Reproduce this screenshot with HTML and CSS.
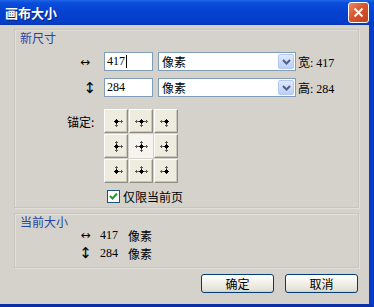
FILE: index.html
```html
<!DOCTYPE html>
<html lang="zh">
<head>
    <meta charset="UTF-8">
    <title>画布大小</title>
    <link rel="stylesheet" href="styles.css">
</head>
<body>
    <svg class="defs" width="0" height="0">
        <symbol id="dot" viewBox="0 0 13 11"><rect x="5" y="4" width="3" height="3" fill="#000"/><rect x="6" y="3" width="1" height="5" fill="#000"/><rect x="4" y="5" width="5" height="1" fill="#000"/></symbol>
        <symbol id="ar" viewBox="0 0 13 11"><rect x="9" y="5" width="4" height="1" fill="#5a5a5a"/><rect x="11" y="4" width="1" height="3" fill="#5a5a5a"/></symbol>
        <symbol id="al" viewBox="0 0 13 11"><rect x="0" y="5" width="4" height="1" fill="#5a5a5a"/><rect x="1" y="4" width="1" height="3" fill="#5a5a5a"/></symbol>
        <symbol id="au" viewBox="0 0 13 11"><rect x="6" y="0" width="1" height="3" fill="#5a5a5a"/><rect x="5" y="1" width="3" height="1" fill="#5a5a5a"/></symbol>
        <symbol id="ad" viewBox="0 0 13 11"><rect x="6" y="8" width="1" height="3" fill="#5a5a5a"/><rect x="5" y="9" width="3" height="1" fill="#5a5a5a"/></symbol>
    </svg>

    <div class="window">
        <div class="titlebar">
            <span class="title">画布大小</span>
            <span class="close">
                <svg width="11" height="11" viewBox="0 0 11 11"><path d="M1.5 1.5 L9.5 9.5 M9.5 1.5 L1.5 9.5" stroke="#fff" stroke-width="2"/></svg>
            </span>
        </div>

        <div class="body">
            <div class="group size-group">
                <div class="legend">新尺寸</div>

                <div class="dim-row">
                    <span class="sym sym-w">↔</span>
                    <span class="field">417<span class="caret"></span></span>
                    <span class="select">像素<span class="drop"><svg width="9" height="6" viewBox="0 0 9 6"><path d="M1 1 L4.5 4.5 L8 1" fill="none" stroke="#4d6185" stroke-width="2"/></svg></span></span>
                    <span class="readout">宽: 417</span>
                </div>

                <div class="dim-row second">
                    <span class="sym sym-h">↕</span>
                    <span class="field">284</span>
                    <span class="select">像素<span class="drop"><svg width="9" height="6" viewBox="0 0 9 6"><path d="M1 1 L4.5 4.5 L8 1" fill="none" stroke="#4d6185" stroke-width="2"/></svg></span></span>
                    <span class="readout">高: 284</span>
                </div>

                <div class="anchor-row">
                    <span class="anchor-label">锚定:</span>
                    <div class="anchor-grid">
                        <span class="cell"><svg viewBox="0 0 13 11"><use href="#dot"/><use href="#ar"/><use href="#ad"/></svg></span>
                        <span class="cell"><svg viewBox="0 0 13 11"><use href="#dot"/><use href="#al"/><use href="#ar"/><use href="#ad"/></svg></span>
                        <span class="cell"><svg viewBox="0 0 13 11"><use href="#dot"/><use href="#al"/><use href="#ad"/></svg></span>
                        <span class="cell"><svg viewBox="0 0 13 11"><use href="#dot"/><use href="#au"/><use href="#ar"/><use href="#ad"/></svg></span>
                        <span class="cell active"><svg viewBox="0 0 13 11"><use href="#dot"/><use href="#au"/><use href="#al"/><use href="#ar"/><use href="#ad"/></svg></span>
                        <span class="cell"><svg viewBox="0 0 13 11"><use href="#dot"/><use href="#au"/><use href="#al"/><use href="#ad"/></svg></span>
                        <span class="cell"><svg viewBox="0 0 13 11"><use href="#dot"/><use href="#au"/><use href="#ar"/></svg></span>
                        <span class="cell"><svg viewBox="0 0 13 11"><use href="#dot"/><use href="#au"/><use href="#al"/><use href="#ar"/></svg></span>
                        <span class="cell"><svg viewBox="0 0 13 11"><use href="#dot"/><use href="#au"/><use href="#al"/></svg></span>
                    </div>
                </div>

                <div class="check-row">
                    <span class="checkbox"><svg width="9" height="9" viewBox="0 0 9 9"><path d="M1 4 L3.5 6.5 L8 1.5" fill="none" stroke="#21a121" stroke-width="2"/></svg></span>
                    <span class="check-label">仅限当前页</span>
                </div>
            </div>

            <div class="group current-group">
                <div class="legend">当前大小</div>
                <div class="cur-row">
                    <span class="cur-sym">↔</span>
                    <span class="cur-num">417</span>
                    <span class="cur-unit">像素</span>
                </div>
                <div class="cur-row">
                    <span class="cur-sym tall">↕</span>
                    <span class="cur-num">284</span>
                    <span class="cur-unit">像素</span>
                </div>
            </div>

            <div class="buttons">
                <button class="xp-btn">确定</button>
                <button class="xp-btn">取消</button>
            </div>
        </div>
    </div>
</body>
</html>
```

FILE: styles.css
```css
body {
    margin: 0;
    padding: 0;
    width: 374px;
    height: 307px;
    overflow: hidden;
    font-family: "Liberation Serif", "Noto Sans CJK SC", sans-serif;
    font-size: 12px;
    color: #000;
}

.defs {
    position: absolute;
}

.window {
    width: 374px;
    height: 307px;
    display: flex;
    flex-direction: column;
}

/* title bar */

.titlebar {
    height: 25px;
    display: flex;
    align-items: center;
    justify-content: space-between;
    padding: 0 5px 0 5px;
    background: linear-gradient(to bottom, #2064e6 0%, #0a4cdc 12%, #0541cf 50%, #043ecb 88%, #0a38b4 100%);
}

.title {
    color: #fff;
    font-family: "Noto Sans CJK SC", sans-serif;
    font-weight: bold;
    font-size: 13px;
    line-height: 16px;
    text-shadow: 1px 1px 0 #0a2470;
}

.close {
    width: 19px;
    height: 19px;
    border: 1px solid #fff;
    border-radius: 3px;
    background: linear-gradient(135deg, #e98a6a 0%, #d9552f 45%, #c2401e 100%);
    display: flex;
    align-items: center;
    justify-content: center;
}

/* dialog body */

.body {
    flex: 1;
    background: #d5d2cb;
    border-right: 5px solid #0a3ccc;
    border-bottom: 3px solid #0b2fa6;
    padding: 4px 10px 0 14px;
    display: flex;
    flex-direction: column;
}

.group {
    border: 1px solid #c8c5bd;
    box-shadow: inset 1px 1px 0 #e2e0da, 1px 1px 0 #e2e0da;
}

.legend {
    height: 16px;
    line-height: 16px;
    padding-left: 5px;
    color: #1f45a6;
    font-family: "Noto Sans CJK SC", sans-serif;
}

.size-group {
    padding-bottom: 4px;
}

.size-group .legend {
    margin-bottom: 6px;
}

.dim-row {
    display: flex;
    align-items: center;
    height: 19px;
}

.dim-row.second {
    margin-top: 7px;
}

.sym {
    width: 83px;
    text-align: right;
    font-family: "DejaVu Sans", sans-serif;
    font-size: 12px;
    box-sizing: border-box;
}

.sym-w {
    padding-right: 8px;
}

.sym-h {
    padding-right: 2px;
    font-size: 15px;
}

.field {
    margin-left: 6px;
    width: 49px;
    height: 19px;
    box-sizing: border-box;
    border: 1px solid #7f9db9;
    background: #fff;
    padding-left: 2px;
    line-height: 17px;
    display: flex;
    align-items: center;
}

.caret {
    width: 1px;
    height: 13px;
    background: #000;
    margin-left: 1px;
}

.select {
    margin-left: 5px;
    width: 138px;
    height: 19px;
    box-sizing: border-box;
    border: 1px solid #7f9db9;
    background: #fff;
    padding-left: 3px;
    display: flex;
    align-items: center;
    justify-content: space-between;
    font-family: "Noto Sans CJK SC", sans-serif;
    line-height: 17px;
}

.drop {
    width: 16px;
    height: 15px;
    margin-right: 1px;
    border-radius: 2px;
    background: linear-gradient(to bottom, #dfe9fd, #bccff6);
    border: 1px solid #b3c8f2;
    box-sizing: border-box;
    display: flex;
    align-items: center;
    justify-content: center;
}

.readout {
    margin-left: 2px;
    white-space: nowrap;
}

/* anchor grid */

.anchor-row {
    display: flex;
    margin-top: 12px;
    padding-left: 52px;
}

.anchor-label {
    width: 37px;
    padding-top: 5px;
    line-height: 16px;
    font-family: "Noto Sans CJK SC", sans-serif;
}

.anchor-grid {
    display: grid;
    grid-template-columns: repeat(3, 24px);
    grid-template-rows: repeat(3, 24px);
    gap: 1px;
}

.cell {
    box-sizing: border-box;
    background: #eeebdf;
    border-top: 1px solid #fff;
    border-left: 1px solid #fff;
    border-right: 1px solid #8f8c82;
    border-bottom: 1px solid #8f8c82;
    box-shadow: inset -1px -1px 0 #c9c6bb;
    display: flex;
    align-items: center;
    justify-content: center;
}

.cell svg {
    width: 13px;
    height: 11px;
}

.cell.active {
    background: #f5f4ef;
    border-color: #f5f4ef;
    box-shadow: none;
}

.check-row {
    display: flex;
    align-items: center;
    margin-top: 7px;
    padding-left: 92px;
    height: 13px;
}

.checkbox {
    width: 13px;
    height: 13px;
    box-sizing: border-box;
    border: 1px solid #1c5180;
    background: #fff;
    display: flex;
    align-items: center;
    justify-content: center;
}

.check-label {
    margin-left: 3px;
    font-family: "Noto Sans CJK SC", sans-serif;
    line-height: 14px;
}

/* current size */

.current-group {
    margin-top: 5px;
    padding-bottom: 5px;
}

.current-group .legend {
    margin-bottom: -4px;
}

.cur-row {
    display: flex;
    align-items: center;
    height: 18px;
    padding-left: 64px;
}

.cur-sym {
    width: 13px;
    text-align: center;
    font-family: "DejaVu Sans", sans-serif;
}

.cur-sym.tall {
    font-size: 15px;
}

.cur-num {
    margin-left: 8px;
    width: 18px;
}

.cur-unit {
    margin-left: 10px;
    font-family: "Noto Sans CJK SC", sans-serif;
}

/* buttons */

.buttons {
    display: flex;
    justify-content: flex-end;
    gap: 11px;
    margin-top: 6px;
    padding-right: 1px;
}

.xp-btn {
    width: 73px;
    height: 19px;
    padding: 0;
    border: 1px solid #003c74;
    border-radius: 3px;
    background: linear-gradient(to bottom, #ffffff 0%, #f3f2ec 40%, #e6e3d8 85%, #d6d0c5 100%);
    font-family: "Noto Sans CJK SC", sans-serif;
    font-size: 12px;
    line-height: 17px;
    color: #000;
}
```
